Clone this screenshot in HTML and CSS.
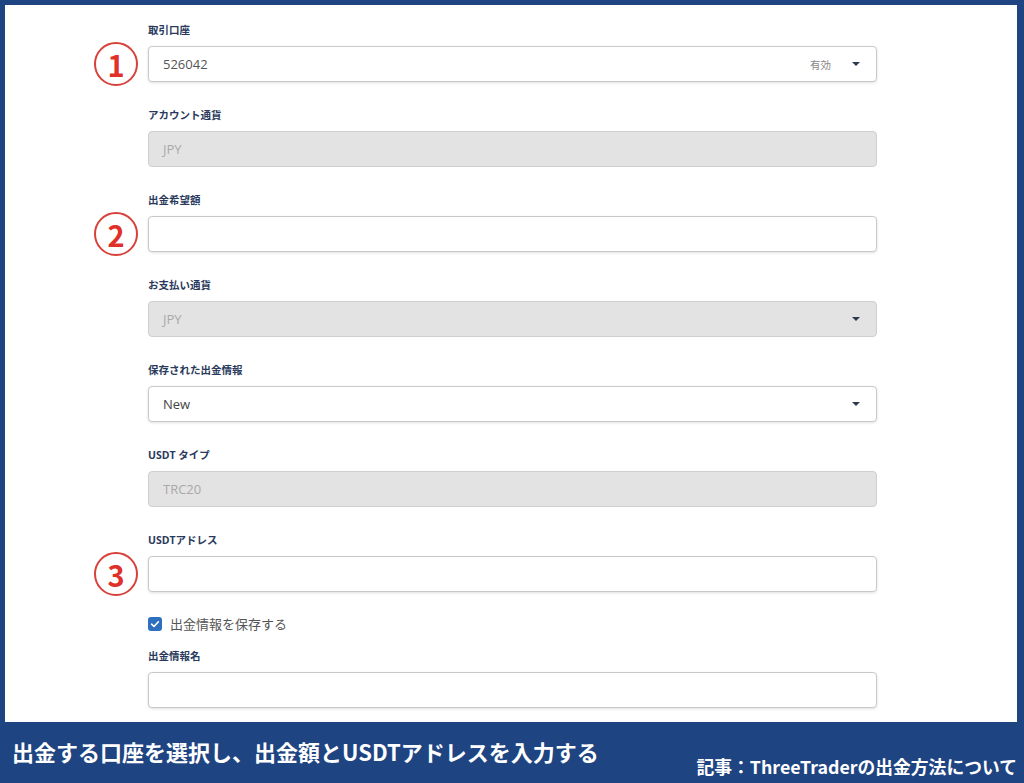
FILE: index.html
```html
<!DOCTYPE html>
<html lang="ja">
<head>
<meta charset="utf-8">
<title>出金</title>
<link rel="stylesheet" href="styles.css">
</head>
<body>
<div class="frame">
  <div class="sheet">
    <div class="field">
      <label class="label">取引口座</label>
      <div class="marker">1</div>
      <div class="control select"><span class="value">526042</span><span class="status">有効</span><span class="caret"></span></div>
    </div>
    <div class="field">
      <label class="label">アカウント通貨</label>
      <div class="control disabled"><span class="value">JPY</span></div>
    </div>
    <div class="field">
      <label class="label">出金希望額</label>
      <div class="marker">2</div>
      <div class="control"></div>
    </div>
    <div class="field">
      <label class="label">お支払い通貨</label>
      <div class="control disabled select"><span class="value">JPY</span><span class="caret"></span></div>
    </div>
    <div class="field">
      <label class="label">保存された出金情報</label>
      <div class="control select"><span class="value dark">New</span><span class="caret"></span></div>
    </div>
    <div class="field">
      <label class="label">USDT タイプ</label>
      <div class="control disabled"><span class="value">TRC20</span></div>
    </div>
    <div class="field">
      <label class="label">USDTアドレス</label>
      <div class="marker">3</div>
      <div class="control"></div>
    </div>
    <div class="check-row">
      <span class="checkbox"><svg viewBox="0 0 14 14" width="14" height="14"><path d="M3.6 7.2 L6 9.5 L10.4 4.8" fill="none" stroke="#fff" stroke-width="1.6" stroke-linecap="round" stroke-linejoin="round"/></svg></span>
      <span class="check-text">出金情報を保存する</span>
    </div>
    <div class="field last">
      <label class="label">出金情報名</label>
      <div class="control"></div>
    </div>
  </div>
  <div class="band">
    <div class="band-title">出金する口座を選択し、出金額とUSDTアドレスを入力する</div>
    <div class="band-note">記事：ThreeTraderの出金方法について</div>
  </div>
</div>
</body>
</html>
```

FILE: styles.css
```css
html, body {
  margin: 0;
  padding: 0;
}
body {
  width: 1024px;
  height: 783px;
  overflow: hidden;
  font-family: "Open Sans", "Noto Sans CJK JP", sans-serif;
}
.frame {
  background: #1f4482;
  padding: 5px 7px 0 5px;
  height: 783px;
  box-sizing: border-box;
  display: flex;
  flex-direction: column;
}
.sheet {
  background: #ffffff;
  height: 717px;
  box-sizing: border-box;
  padding-top: 17px;
  overflow: hidden;
}
.field {
  display: grid;
  grid-template-columns: 143px 729px;
  grid-template-rows: 16px 36px;
  row-gap: 8px;
  margin-bottom: 25px;
}
.field.last {
  margin-bottom: 0;
}
.label {
  grid-column: 2;
  grid-row: 1;
  font-family: "Open Sans", "Noto Sans CJK JP", sans-serif;
  font-weight: 700;
  font-size: 10.5px;
  line-height: 16px;
  color: #2a3a5c;
}
.marker {
  grid-column: 1;
  grid-row: 2;
  justify-self: end;
  align-self: center;
  margin-right: 10px;
  width: 40px;
  height: 40px;
  border: 2px solid #d8403a;
  border-radius: 50%;
  display: flex;
  align-items: center;
  justify-content: center;
  font-family: "Noto Sans CJK JP", sans-serif;
  font-weight: 700;
  font-size: 29px;
  line-height: 1;
  color: #e0302a;
}
.control {
  grid-column: 2;
  grid-row: 2;
  box-sizing: border-box;
  height: 36px;
  border: 1px solid #c9c9c9;
  border-radius: 4px;
  background: #fff;
  box-shadow: 0 1px 3px rgba(0, 0, 0, 0.12);
  display: flex;
  align-items: center;
  padding: 0 16px 0 14px;
}
.control.disabled {
  background: #e3e3e3;
  box-shadow: none;
  border-color: #cfcfcf;
}
.value {
  flex: 1;
  font-size: 13px;
  color: #555;
}
.value.dark {
  color: #444;
}
.disabled .value {
  color: #a9a9a9;
}
.status {
  font-family: "Noto Sans CJK JP", sans-serif;
  font-size: 10.5px;
  color: #888;
  margin-right: 21px;
}
.caret {
  width: 0;
  height: 0;
  border-left: 4px solid transparent;
  border-right: 4px solid transparent;
  border-top: 4px solid #2f3a4e;
}
.check-row {
  display: flex;
  align-items: center;
  height: 14px;
  margin: 25px 0 17px 143px;
}
.checkbox {
  width: 14px;
  height: 14px;
  border-radius: 3px;
  background: #2f6fbf;
  display: flex;
  margin-right: 8px;
}
.check-text {
  font-family: "Noto Sans CJK JP", sans-serif;
  font-size: 13px;
  line-height: 14px;
  color: #555;
}
.band {
  flex: 1;
  position: relative;
  color: #fff;
  font-family: "Noto Sans CJK JP", sans-serif;
  font-weight: 700;
}
.band-title {
  font-size: 22px;
  line-height: 30px;
  padding: 14px 0 0 7px;
}
.band-note {
  position: absolute;
  right: 0;
  bottom: 5px;
  font-size: 17.8px;
  line-height: 24px;
}
```
